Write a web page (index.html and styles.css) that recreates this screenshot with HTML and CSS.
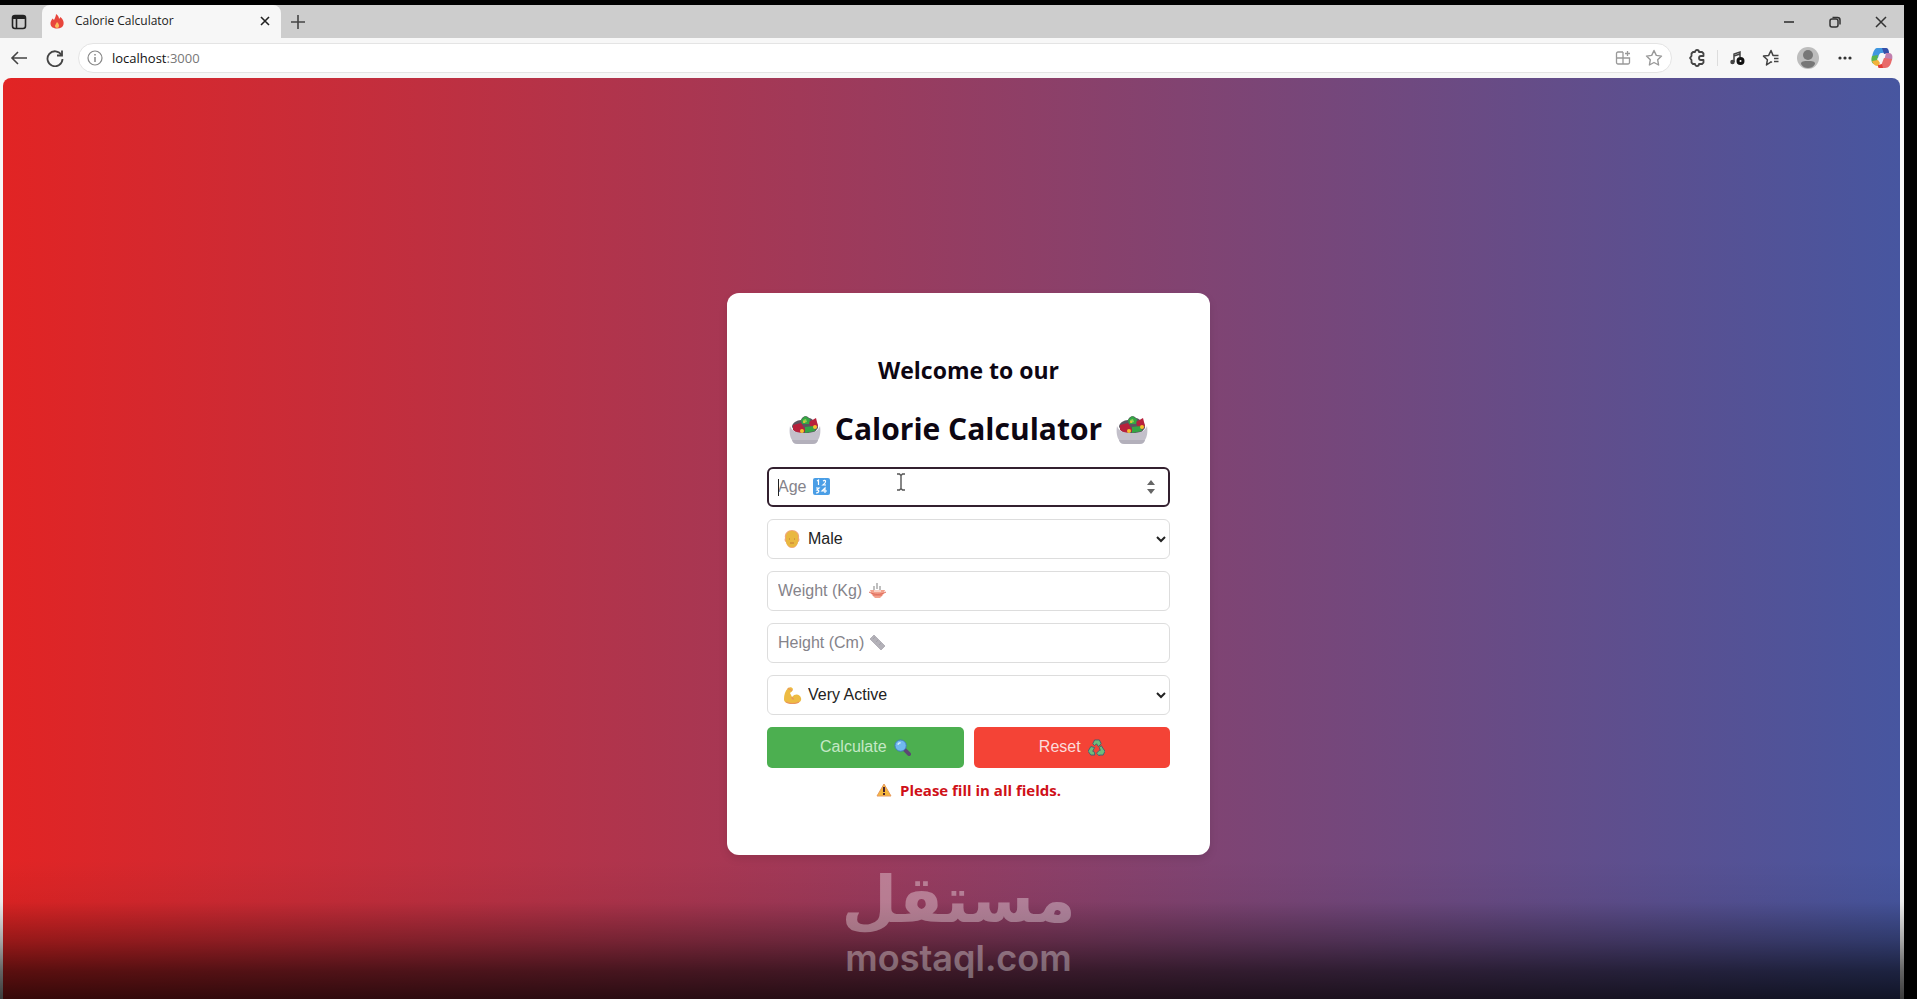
FILE: index.html
```html
<!DOCTYPE html>
<html lang="en">

<head>
    <meta charset="UTF-8">
    <meta name="viewport" content="width=device-width, initial-scale=1.0">
    <title>Calorie Calculator</title>
    <link rel="stylesheet" href="styles.css">
</head>

<body>
    <!-- Shared emoji drawings -->
    <svg class="sprite" aria-hidden="true">
        <symbol id="salad" viewBox="0 0 32 32">
            <path d="M3 14c0-4 5-7 9-7 1-4 6-5 8-2 3 0 4 3 6 3 2 1 3 4 3 7l-4 5H7z" fill="#5b5560" />
            <path d="M4 12l8-2 5 8-7 3-6-4zM20 9l7-4 2 8-6 5z" fill="#b8213c" />
            <path d="M12 7l4-4 5 3-1 5-7 0zM16 14l9-1 1 5-10 2z" fill="#35a545" />
            <path d="M14 7l3-1 1 3-3 1z" fill="#8fd14f" />
            <circle cx="13" cy="18" r="2" fill="#f6c12f" />
            <circle cx="26" cy="14" r="2" fill="#f6c12f" />
            <circle cx="15" cy="9" r="1" fill="#f6c12f" />
            <path d="M1 13c2 5 6 7 15 7s13-2 15-7c1 6 0 11-2 14-1 3-3 4-6 4H9c-3 0-5-1-6-4-2-3-3-8-2-14z" fill="#c3c0ca" />
            <path d="M3 27h26c-1 3-3 4-6 4H9c-3 0-5-1-6-4z" fill="#b3b0bb" />
        </symbol>
    </svg>

    <div class="window">
        <!-- Browser tabs -->
        <div class="tab-bar">
            <button class="icon-btn tab-actions" aria-label="Tab actions">
                <svg width="16" height="16" viewBox="0 0 16 16" fill="none" stroke="#222" stroke-width="1.6">
                    <rect x="1.5" y="1.5" width="13" height="13" rx="2.5" />
                    <path d="M2 3.5h12" stroke-width="3" />
                    <path d="M5.5 5v9" />
                </svg>
            </button>
            <div class="tab">
                <svg width="14" height="16" viewBox="0 0 14 16">
                    <path d="M6 1c3 2 3 4 3 5l1.500-2c3 3 3.500 5 3 7.500C13 14 10.500 15.500 7 15.500S.8 14 .5 11C.3 8.500 1.500 7 2.500 5.500L4 7c1-2 2-4 2-6z" fill="#e8463c" />
                    <path d="M7 9c2 2 2 3 2 4s-1 2-2 2-2-1-2-2 1-2 2-4z" fill="#fbbc5a" />
                </svg>
                <span class="tab-title">Calorie Calculator</span>
                <button class="icon-btn" aria-label="Close tab">
                    <svg width="10" height="10" viewBox="0 0 10 10" stroke="#222" stroke-width="1.6"><path d="M1 1l8 8M9 1l-8 8" /></svg>
                </button>
            </div>
            <button class="icon-btn new-tab" aria-label="New tab">
                <svg width="14" height="14" viewBox="0 0 14 14" stroke="#444" stroke-width="1.6"><path d="M7 0v14M0 7h14" /></svg>
            </button>
            <div class="window-controls">
                <button class="icon-btn" aria-label="Minimize">
                    <svg width="12" height="12" viewBox="0 0 12 12" stroke="#333" stroke-width="1.6"><path d="M1 6h10" /></svg>
                </button>
                <button class="icon-btn" aria-label="Restore">
                    <svg width="12" height="12" viewBox="0 0 12 12" fill="none" stroke="#333" stroke-width="1.5">
                        <rect x="1" y="3" width="8" height="8" rx="2" />
                        <path d="M3.500 1.500H8.500a2.500 2.500 0 0 1 2.500 2.500V8.500" />
                    </svg>
                </button>
                <button class="icon-btn" aria-label="Close">
                    <svg width="12" height="12" viewBox="0 0 12 12" stroke="#333" stroke-width="1.5"><path d="M1 1l10 10M11 1L1 11" /></svg>
                </button>
            </div>
        </div>

        <!-- Address bar -->
        <div class="toolbar">
            <button class="icon-btn" aria-label="Back">
                <svg width="18" height="16" viewBox="0 0 18 16" fill="none" stroke="#444" stroke-width="1.6"><path d="M17 8H2M8 2L2 8l6 6" /></svg>
            </button>
            <button class="icon-btn" aria-label="Refresh">
                <svg width="18" height="18" viewBox="0 0 18 18" fill="none" stroke="#444" stroke-width="1.8">
                    <path d="M15.500 6A7.500 7.500 0 1 0 16.500 10" />
                    <path d="M16 1.500V6.500H11" />
                </svg>
            </button>
            <div class="address">
                <svg width="16" height="16" viewBox="0 0 16 16" fill="none" stroke="#888" stroke-width="1.2">
                    <circle cx="8" cy="8" r="7" />
                    <path d="M8 7v5M8 4v1.500" stroke-width="1.500" />
                </svg>
                <span class="url">localhost<span class="port">:3000</span></span>
                <svg width="16" height="16" viewBox="0 0 16 16" fill="none" stroke="#999" stroke-width="1.3">
                    <path d="M8 2H3a1.500 1.500 0 0 0-1.500 1.500v9A1.500 1.500 0 0 0 3 14h10a1.500 1.500 0 0 0 1.500-1.500V8H1.500M8 2v12M12.500 1v5M10 3.500h5" />
                </svg>
                <svg width="18" height="18" viewBox="0 0 18 18" fill="none" stroke="#999" stroke-width="1.4" stroke-linejoin="round">
                    <path d="M9 1.500l2.300 4.900 5.200.7-3.800 3.700.9 5.200L9 13.500 4.400 16l.9-5.200L1.500 7.100l5.200-.7z" />
                </svg>
            </div>
            <div class="tools">
                <button class="icon-btn" aria-label="Extensions">
                    <svg width="18" height="18" viewBox="0 0 18 18" fill="none" stroke="#444" stroke-width="1.800" stroke-linejoin="round">
                        <path d="M7 3a2 2 0 0 1 4 0h3l1.500 1.500V7H13a2 2 0 0 0 0 4h2.500v2.500L14 15h-3a2 2 0 0 1-4 0H5l-1.500-1.500V11L2 9l1.500-2V4.500L5 3z" />
                    </svg>
                </button>
                <span class="divider"></span>
                <button class="icon-btn" aria-label="Media">
                    <svg width="16" height="16" viewBox="0 0 16 16" fill="none" stroke="#444" stroke-width="1.500">
                        <path d="M5 12V4l6-2v5M5 6l6-2" />
                        <circle cx="3.500" cy="12" r="1.500" fill="#444" />
                        <circle cx="11.500" cy="11" r="2.500" stroke="#111" stroke-width="3" fill="#fff" />
                    </svg>
                </button>
                <button class="icon-btn" aria-label="Favorites">
                    <svg width="18" height="18" viewBox="0 0 18 18" fill="none" stroke="#444" stroke-width="1.500" stroke-linejoin="round">
                        <path d="M10 13.500l-1-.7L4.500 16l.9-5.200L1.500 7.100l5.200-.7L9 1.500l2 4.900h5.500M12 9.500h4.500M12 12.500h4.500" />
                    </svg>
                </button>
                <button class="icon-btn" aria-label="Profile">
                    <svg width="22" height="22" viewBox="0 0 22 22">
                        <circle cx="11" cy="11" r="11" fill="#bdbdbd" />
                        <circle cx="11" cy="8" r="5" fill="#777" />
                        <path d="M4 17c0-3 3-3 7-3s7 0 7 3c-2 3-4 4-7 4s-5-1-7-4z" fill="#777" />
                    </svg>
                </button>
                <button class="icon-btn more" aria-label="Settings">
                    <svg width="14" height="4" viewBox="0 0 14 4" fill="#333"><circle cx="2" cy="2" r="1.600" /><circle cx="7" cy="2" r="1.600" /><circle cx="12" cy="2" r="1.600" /></svg>
                </button>
                <button class="icon-btn" aria-label="Copilot">
                    <svg width="22" height="22" viewBox="0 0 22 22">
                        <path d="M6 1h8c2 0 3 2 3 4l-6 1c-3 0-3 2-4 5L1 12C1 8 3 1 6 1z" fill="#3f97e0" />
                        <path d="M11 1h4c2 0 3 2 3 5l-5 1z" fill="#354fa8" />
                        <path d="M1 9l6-1-1 6c0 2-1 3-3 3-3-1-3-5-2-8z" fill="#58b54c" />
                        <path d="M1 14l6-1 2 3-2 3c-3 0-5-2-6-5z" fill="#f2b23b" />
                        <path d="M15 6h3c3 0 4 3 3 7l-5 3-3-2z" fill="#c07fae" />
                        <path d="M13 11l8 1c-1 6-3 9-7 9H8c2-1 3-5 5-10z" fill="#e86a6a" />
                        <path d="M7 18l4-1 1 4H8c-1 0-1-2-1-3z" fill="#e23b35" />
                    </svg>
                </button>
            </div>
        </div>

        <main class="page">
            <form class="card">
                <h2>Welcome to our</h2>
                <h1>
                    <svg width="32" height="32"><use href="#salad" /></svg>
                    <span>Calorie Calculator</span>
                    <svg width="32" height="32"><use href="#salad" /></svg>
                </h1>

                <div class="field age">
                    <input type="number" id="age" placeholder="Age" aria-label="Age">
                    <span class="caret"></span>
                    <svg class="emoji" width="17" height="17" viewBox="0 0 17 17">
                        <rect width="17" height="17" rx="2" fill="#4a9ee6" />
                        <path d="M4 3l1.500-1v5M10 3c3-2 4 1 0 4h3M3 10h3l-2 2c3 0 2 3-1 3M12 15v-5l-3 3h5" fill="none" stroke="#fff" stroke-width="1.200" />
                    </svg>
                    <svg class="spinner" width="8" height="14" viewBox="0 0 8 14" fill="#666"><path d="M4 0l4 5H0zM4 14l4-5H0z" /></svg>
                    <svg class="pointer" width="8" height="18" viewBox="0 0 8 18" fill="none" stroke="#555" stroke-width="1.400"><path d="M0 1h2.500L4 2.500 5.500 1H8M0 17h2.500L4 15.500 5.500 17H8M4 2v14" /></svg>
                </div>
                <div class="field pick">
                    <select id="gender" aria-label="Gender">
                        <option>Male</option>
                        <option>Female</option>
                    </select>
                    <svg class="emoji" width="16" height="18" viewBox="0 0 16 18">
                        <path d="M1 8C0 3 4 0 8 0s8 3 7 8c1 2 0 4-1 4-1 4-3 6-6 6s-5-2-6-6c-1 0-2-2-1-4z" fill="#f0a878" />
                        <path d="M2 7c0-4 3-6 6-6s6 2 6 6v4c0 4-3 6-6 6s-6-2-6-6z" fill="#e9b840" />
                        <path d="M5 9h1M10 9h1M6 13h4" stroke="#c47a35" />
                    </svg>
                </div>
                <div class="field weight">
                    <input type="text" id="weight" placeholder="Weight (Kg)" aria-label="Weight (Kg)">
                    <svg class="emoji" width="17" height="17" viewBox="0 0 17 17">
                        <path d="M8 1v6M5 4v4M11 4v4" stroke="#aaa" stroke-width="1.500" />
                        <path d="M1 8h15l-2 5-3 3H6l-3-3z" fill="#f3a18c" />
                        <path d="M0 10c5 3 12 3 17 0M4 13h9" fill="none" stroke="#df6c5c" />
                        <path d="M5 9h7" stroke="#fff" />
                    </svg>
                </div>
                <div class="field height">
                    <input type="text" id="height" placeholder="Height (Cm)" aria-label="Height (Cm)">
                    <svg class="emoji" width="17" height="17" viewBox="0 0 17 17">
                        <path d="M5 1l11 11-4 4L1 5z" fill="#b3b1b8" stroke="#b3b1b8" stroke-linejoin="round" />
                        <path d="M6 3L4 5M9 6L7 8M12 9l-2 2" stroke="#a4a2aa" />
                    </svg>
                </div>
                <div class="field pick">
                    <select id="activity" aria-label="Activity level">
                        <option>Very Active</option>
                        <option>Moderately Active</option>
                        <option>Sedentary</option>
                    </select>
                    <svg class="emoji" width="18" height="18" viewBox="0 0 18 18">
                        <path d="M4 2c2-1 4-1 5 1 0 2-2 3-3 4l2 4c3-4 8-3 9 1 1 3-2 5-5 5H5c-3 0-5-1-5-4 0-4 1-8 4-11z" fill="#edbb43" />
                        <path d="M2 16c4 2 9 2 13 0M8 11c0 1 1 2 2 2M4 2c1 2 3 1 4 3" fill="none" stroke="#e9955d" stroke-width="1.200" />
                    </svg>
                </div>

                <div class="buttons">
                    <button type="button" class="calculate">
                        Calculate
                        <svg width="17" height="17" viewBox="0 0 18 18">
                            <path d="M11 11l5 5" stroke="#5c4873" stroke-width="4" stroke-linecap="round" />
                            <circle cx="7" cy="7" r="6" fill="#70b8ef" stroke="#3f79bd" />
                            <path d="M4 6c1-2 2-2 3-2" fill="none" stroke="#d5efff" stroke-width="1.500" />
                        </svg>
                    </button>
                    <button type="button" class="reset">
                        Reset
                        <svg width="17" height="17" viewBox="0 0 18 18" stroke="#456171" stroke-width="1">
                            <path d="M5 5l2-4h5l2 4-3 3-2-3-2 2z" fill="#6ebc7c" />
                            <path d="M3 8l4 1-2 4 2 1v3H3l-3-4z" fill="#6ebc7c" />
                            <path d="M14 7l4 6-2 4h-4v1l-3-3 3-3h1l-1-3z" fill="#6ebc7c" />
                        </svg>
                    </button>
                </div>

                <p class="message">
                    <svg width="16" height="14" viewBox="0 0 16 14">
                        <path d="M8 1l7 12H1z" fill="#f5b83d" stroke="#e79a5f" stroke-linejoin="round" />
                        <path d="M8 4v5M8 10v2" stroke="#4a2430" stroke-width="2" />
                    </svg>
                    Please fill in all fields.
                </p>
            </form>
        </main>
    </div>

    <!-- Bottom shade with the watermark -->
    <div class="shade">
        <div class="watermark">
            <span class="brand" lang="ar" dir="rtl">مستقل</span>
            <span class="domain">mostaql.com</span>
        </div>
    </div>
</body>

</html>
```

FILE: styles.css
```css
* {
    box-sizing: border-box;
}

body {
    margin: 0;
    height: 100vh;
    padding: 5px 13px 0 0;
    background: #000;
    font-family: "Open Sans", sans-serif;
    overflow: hidden;
}

svg {
    display: block;
    flex: none;
}

.sprite {
    position: absolute;
    width: 0;
    height: 0;
}

.window {
    display: flex;
    flex-direction: column;
    height: 100%;
    background: #f7f7f7;
}

.icon-btn {
    display: flex;
    align-items: center;
    justify-content: center;
    padding: 0;
    border: none;
    background: none;
}

/* Tabs */
.tab-bar {
    display: flex;
    align-items: center;
    height: 33px;
    background: #cdcdcd;
}

.tab-actions {
    width: 42px;
    padding-right: 4px;
}

.tab {
    display: flex;
    align-items: center;
    gap: 11px;
    width: 239px;
    height: 33px;
    padding: 0 11px 2px 8px;
    border-radius: 8px 8px 0 0;
    background: #f7f7f7;
}

.tab-title {
    flex: 1;
    font-size: 12px;
    color: #222;
}

.new-tab {
    margin-left: 10px;
}

.window-controls {
    display: flex;
    gap: 34px;
    margin-left: auto;
    padding-right: 17px;
}

/* Toolbar */
.toolbar {
    display: flex;
    align-items: center;
    height: 40px;
    padding: 0 11px 0 10px;
}

.toolbar > .icon-btn {
    width: 18px;
    margin-right: 18px;
}

.address {
    display: flex;
    align-items: center;
    flex: 1;
    gap: 14px;
    height: 30px;
    margin-left: -4px;
    padding: 0 8px;
    border: 1px solid #e4e4e4;
    border-radius: 15px;
    background: #fff;
}

.url {
    flex: 1;
    margin-left: -5px;
    font-size: 13px;
    color: #111;
}

.port {
    color: #777;
}

.tools {
    display: flex;
    align-items: center;
    gap: 17px;
    margin-left: 16px;
}

.more {
    width: 18px;
}

.divider {
    width: 1px;
    height: 16px;
    margin: 0 -6px;
    background: #ddd;
}

/* Page */
.page {
    display: flex;
    align-items: center;
    justify-content: center;
    flex: 1;
    margin: 0 4px 0 3px;
    padding-top: 70px;
    border-radius: 8px 8px 0 0;
    background: linear-gradient(to right, #e22424, #4756a0);
}

.card {
    display: flex;
    flex-direction: column;
    gap: 12px;
    width: 483px;
    margin-left: 34px;
    padding: 60px 40px 55px;
    border-radius: 12px;
    background: #fff;
    box-shadow: 0 4px 8px rgba(0, 0, 0, 0.1);
}

h1,
h2 {
    margin: 0;
    text-align: center;
    color: #0d0612;
}

h2 {
    font-size: 23px;
    line-height: 34px;
}

h1 {
    display: flex;
    align-items: center;
    justify-content: center;
    gap: 14px;
    font-size: 30px;
    line-height: 44px;
    margin: 8px 0 4px;
}

.field {
    position: relative;
}

.field input,
.field select {
    display: block;
    width: 100%;
    height: 40px;
    padding: 0 10px;
    border: 1px solid #ddd;
    border-radius: 6px;
    background: #fff;
    font-family: "Liberation Sans", Arial, sans-serif;
    font-size: 16px;
    color: #222;
}

.field input::placeholder {
    color: #85838a;
}

.field input[type="number"] {
    appearance: textfield;
}

.age input {
    border: 2px solid #33202f;
    padding: 0 9px;
}

.pick select {
    padding: 0 0 0 36px;
}

.emoji {
    position: absolute;
    top: 11px;
    left: 17px;
}

.age .emoji {
    left: 46px;
}

.weight .emoji,
.height .emoji {
    left: 102px;
}

.caret {
    position: absolute;
    top: 12px;
    left: 11px;
    width: 1px;
    height: 17px;
    background: #222;
}

.spinner {
    position: absolute;
    top: 13px;
    right: 15px;
}

.pointer {
    position: absolute;
    top: 6px;
    left: 130px;
}

.buttons {
    display: flex;
    gap: 10px;
}

.buttons button {
    display: flex;
    align-items: center;
    justify-content: center;
    gap: 7px;
    flex: 1;
    height: 41px;
    border: none;
    border-radius: 5px;
    font-family: "Liberation Sans", Arial, sans-serif;
    font-size: 16px;
}

.calculate {
    background: #4caf50;
    color: #c5e8c6;
}

.reset {
    background: #f44336;
    color: #fbdcda;
}

.message {
    display: flex;
    align-items: center;
    justify-content: center;
    gap: 8px;
    margin: 0;
    font-size: 15px;
    font-weight: bold;
    line-height: 20px;
    color: #cf1018;
}

/* Watermark */
.shade {
    position: absolute;
    right: 0;
    bottom: 0;
    left: 0;
    display: flex;
    justify-content: center;
    height: 139px;
    background: linear-gradient(transparent, rgba(0, 0, 0, 0.05) 30%, rgba(0, 0, 0, 0.33) 58%, rgba(0, 0, 0, 0.6) 80%, rgba(0, 0, 0, 0.76));
}

.watermark {
    display: flex;
    flex-direction: column;
    align-items: center;
    padding-top: 2px;
    color: #fff;
    opacity: 0.34;
    font-weight: bold;
}

.brand {
    font-family: "DejaVu Sans", sans-serif;
    font-size: 64px;
    line-height: 76px;
}

.domain {
    font-family: Inter, sans-serif;
    font-size: 36px;
    font-weight: 600;
    line-height: 40px;
}
```
